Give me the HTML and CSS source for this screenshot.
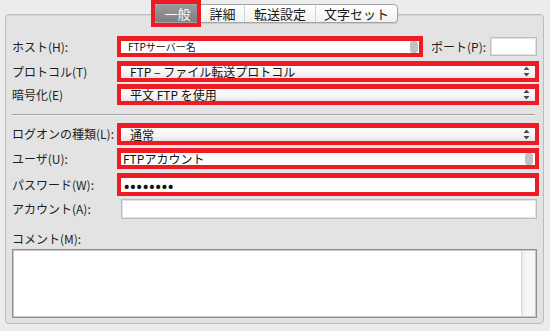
FILE: index.html
```html
<!DOCTYPE html>
<html lang="ja">
<head>
<meta charset="utf-8">
<link rel="stylesheet" href="styles.css">
</head>
<body>
<div class="window">
  <div class="panel">
    <div class="tabs">
      <div class="tab sel">一般</div>
      <div class="tab">詳細</div>
      <div class="tab">転送設定</div>
      <div class="tab">文字セット</div>
      <div class="tab-mark"></div>
    </div>

    <div class="row r-host">
      <div class="lbl">ホスト(H):</div>
      <div class="mark textbox host"><span class="val small">FTPサーバー名</span><span class="thumb"></span></div>
      <div class="lbl port-lbl">ポート(P):</div>
      <div class="input port"></div>
    </div>
    <div class="row r-proto">
      <div class="lbl">プロトコル(T)</div>
      <div class="mark select"><span class="val">FTP – ファイル転送プロトコル</span>
        <svg class="arrows" width="7" height="11" viewBox="0 0 7 11"><path d="M3.5 0.5 L6.5 4 L0.5 4 Z M0.5 7 L6.5 7 L3.5 10.5 Z" fill="#4a4a4a"/></svg>
      </div>
    </div>
    <div class="row r-enc">
      <div class="lbl">暗号化(E)</div>
      <div class="mark select"><span class="val">平文 FTP を使用</span>
        <svg class="arrows" width="7" height="11" viewBox="0 0 7 11"><path d="M3.5 0.5 L6.5 4 L0.5 4 Z M0.5 7 L6.5 7 L3.5 10.5 Z" fill="#4a4a4a"/></svg>
      </div>
    </div>

    <div class="sep"></div>

    <div class="row r-logon">
      <div class="lbl">ログオンの種類(L):</div>
      <div class="mark select"><span class="val">通常</span>
        <svg class="arrows" width="7" height="11" viewBox="0 0 7 11"><path d="M3.5 0.5 L6.5 4 L0.5 4 Z M0.5 7 L6.5 7 L3.5 10.5 Z" fill="#4a4a4a"/></svg>
      </div>
    </div>
    <div class="row r-user">
      <div class="lbl">ユーザ(U):</div>
      <div class="mark textbox user"><span class="val tight">FTPアカウント</span><span class="thumb"></span></div>
    </div>
    <div class="row r-pass">
      <div class="lbl">パスワード(W):</div>
      <div class="mark textbox pass"><span class="val dots">••••••••</span></div>
    </div>
    <div class="row r-acct">
      <div class="lbl">アカウント(A):</div>
      <div class="input acct"></div>
    </div>

    <div class="lbl comment-lbl">コメント(M):</div>
    <div class="textarea"><div class="track"></div></div>
  </div>
</div>
</body>
</html>
```

FILE: styles.css
```css
* { box-sizing: border-box; }

html, body {
  margin: 0;
  padding: 0;
  background: #ececec;
  font-family: "Noto Sans CJK JP", "Noto Sans", sans-serif;
  color: #1e1e1e;
}

.window {
  width: 550px;
  height: 331px;
  padding: 14px 6px 0 5px;
}

.panel {
  position: relative;
  width: 539px;
  background: #e3e3e3;
  border: 1px solid #bcbcbc;
  border-radius: 4px;
  box-shadow: inset 0 1px 1px rgba(0,0,0,0.06);
  padding: 21px 4px 5px 6px;
  display: flex;
  flex-direction: column;
}

/* Tabs */
.tabs {
  position: absolute;
  left: 147px;
  top: -11px;
  height: 19px;
  display: flex;
  border: 1px solid #a3a3a3;
  border-radius: 4px;
  background: linear-gradient(#ffffff, #f1f1f1);
  box-shadow: 0 1px 1px rgba(0,0,0,0.12);
}
.tab {
  font-size: 13px;
  line-height: 17px;
  height: 17px;
  text-align: center;
  color: #1a1a1a;
  border-left: 1px solid #d2d2d2;
}
.tab:nth-child(1) { width: 47px; border-left: 0; }
.tab:nth-child(2) { width: 43px; border-left: 0; }
.tab:nth-child(3) { width: 71px; }
.tab:nth-child(4) { width: 82px; }
.tab.sel {
  background: linear-gradient(#9a9a9a, #7e7e7e);
  color: #ffffff;
  border-radius: 3px 0 0 3px;
}
.tab-mark {
  position: absolute;
  left: -3px;
  top: -5px;
  width: 50px;
  height: 27px;
  border: 4px solid #ed1c24;
}

/* Rows */
.row {
  display: flex;
  align-items: center;
}
.lbl {
  font-size: 12px;
  line-height: 14px;
  white-space: nowrap;
}
.row > .lbl:first-child { width: 105px; flex: none; }

.r-host { height: 21px; }
.r-proto { height: 21px; margin-top: 4px; }
.r-enc { height: 21px; margin-top: 2px; }
.r-logon { height: 22px; margin-top: 7px; }
.r-user { height: 21px; margin-top: 3px; }
.r-pass { height: 23px; margin-top: 4px; }
.r-acct { height: 20px; margin-top: 3px; }

.sep {
  height: 2px;
  margin: 9px 4px 0 0;
  border-top: 1px solid #a2a2a2;
  border-bottom: 1px solid #f2f2f2;
}

/* Red annotation boxes around fields */
.mark {
  position: relative;
  height: 100%;
  border: 4px solid #ed1c24;
  border-top-width: 5px;
  display: flex;
  align-items: center;
  overflow: hidden;
}
.val {
  font-size: 12px;
  line-height: 12px;
  white-space: nowrap;
  color: #111;
}
.val.small { font-size: 10px; }

.textbox { background: #ffffff; }
.host { width: 306px; flex: none; padding-left: 7px; }
.user { flex: 1; padding-left: 2px; }
.pass { flex: 1; padding-left: 3px; }
.dots { font-size: 14px; line-height: 12px; letter-spacing: 1px; font-weight: bold; }

.thumb {
  position: absolute;
  right: 2px;
  top: 0;
  bottom: 0;
  width: 8px;
  border-radius: 3px;
  background: #c2c2c2;
}
.host .thumb { right: 1px; }
.user .thumb { right: 2px; }

.select {
  flex: 1;
  padding-left: 9px;
  background: linear-gradient(#ffffff, #f4f4f4 60%, #e6e6e6);
}
.arrows {
  position: absolute;
  right: 5px;
  top: 50%;
  margin-top: -6px;
}

.port-lbl { margin-left: 8px; width: 59px; }
.input {
  background: #ffffff;
  border: 1px solid #bdbdbd;
  box-shadow: inset 0 0 0 1px #e2e2e2;
}
.port { width: 47px; height: 19px; align-self: flex-start; margin-top: 1px; }
.acct { flex: none; width: 416px; height: 20px; margin-left: 4px; }

.comment-lbl { margin-top: 13px; }

.textarea {
  position: relative;
  margin-top: 3px;
  width: 525px;
  height: 69px;
  background: #ffffff;
  border: 1px solid #8e8e8e;
  box-shadow: inset 0 0 0 1px #c9c9c9;
}
.track {
  position: absolute;
  right: 1px;
  top: 1px;
  bottom: 1px;
  width: 14px;
  background: linear-gradient(to right, #ececec, #f9f9f9 40%, #f4f4f4);
  border-left: 1px solid #dadada;
}
```
